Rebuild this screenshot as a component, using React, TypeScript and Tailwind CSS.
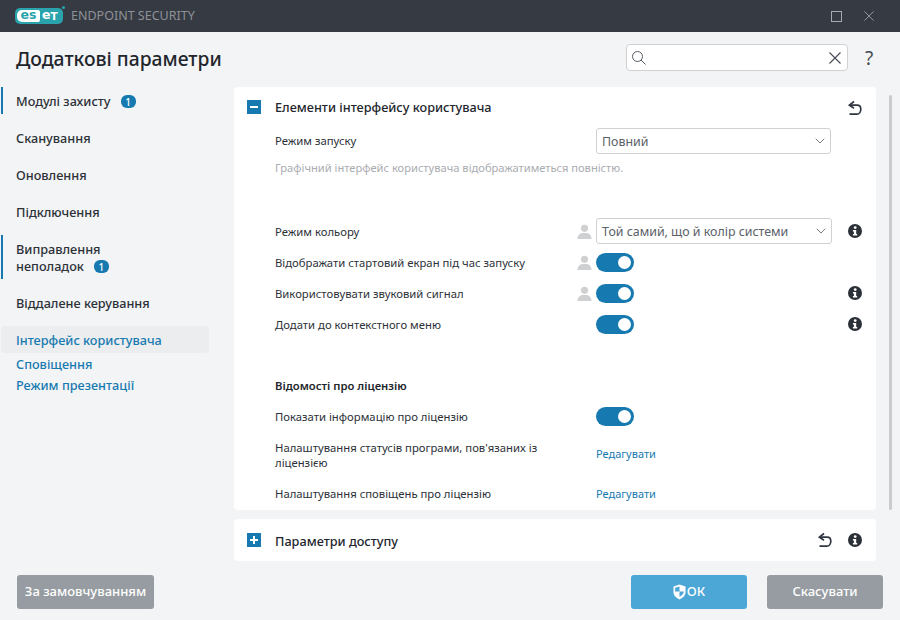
import { ChevronDown } from "lucide-react";

const font = "font-['Noto_Sans','Open_Sans',sans-serif]";

const Info = () => (
  <svg viewBox="0 0 14 14" className="h-[14px] w-[14px]">
    <circle cx="7" cy="7" r="7" fill="#2c3138" />
    <circle cx="7.200" cy="3.600" r="1.400" fill="#fff" />
    <path d="M4.900 6h3.300v4h1v1.500H4.900V10h1V7.400h-1z" fill="#fff" />
  </svg>
);

const User = () => (
  <svg viewBox="0 0 16 16" className="h-[15px] w-[15px]">
    <circle cx="8" cy="4.600" r="3.800" fill="#cfd0d2" />
    <path d="M0.500 16c0-4 2.500-6 5-6.500h5c2.500.5 5 2.500 5 6.500z" fill="#cfd0d2" />
  </svg>
);

const Undo = () => (
  <svg viewBox="0 0 16 16" className="h-4 w-4" fill="none" stroke="#2f3640" strokeWidth="1.700">
    <path d="M7 1.500 2.400 5.200 7 8.200" />
    <path d="M2.800 5.200h7.400c2.200 0 3.600 1.700 3.600 4s-1.400 5-3.900 5H2.500" />
  </svg>
);

const Cross = ({ size, color, width = 1 }: { size: number; color: string; width?: number }) => (
  <svg viewBox="0 0 12 12" width={size} height={size} fill="none" stroke={color} strokeWidth={width}>
    <path d="M0.500 0.500 11.500 11.500M11.500 0.500 0.500 11.500" />
  </svg>
);

const Toggle = () => (
  <div className="flex h-[19px] w-[38px] items-center justify-end rounded-full bg-[#167ab0] pr-[3px]">
    <div className="h-[13px] w-[13px] rounded-full bg-white" />
  </div>
);

const Badge = () => (
  <span className="flex h-[13px] w-[15px] items-center justify-center rounded-[6px] bg-[#167ab0] text-[10px] leading-none text-white">
    1
  </span>
);

const Expander = ({ plus }: { plus?: boolean }) => (
  <div className="relative h-[14px] w-[14px] bg-[#167ab0]">
    <div className="absolute left-[3px] top-[6px] h-[2px] w-[8px] bg-white" />
    {plus && <div className="absolute left-[6px] top-[3px] h-[8px] w-[2px] bg-white" />}
  </div>
);

const Row = ({
  label,
  user,
  info,
  children,
  className = "h-[31px]",
}: {
  label: React.ReactNode;
  user?: boolean;
  info?: boolean;
  children?: React.ReactNode;
  className?: string;
}) => (
  <div className={`flex items-center ${className}`}>
    <div className="w-[343px] pl-[41px] text-[11.300px] leading-[15px] text-[#2c3138]">{label}</div>
    <div className="flex w-[19px] justify-start">{user && <User />}</div>
    <div className="w-[236px]">{children}</div>
    <div className="ml-px flex w-[43px] justify-center">{info && <Info />}</div>
  </div>
);

const Select = ({ value, className = "w-[235px]" }: { value: string; className?: string }) => (
  <div
    className={`flex h-[26px] items-center justify-between rounded-[3px] border border-[#cfd1d3] bg-white pl-[5px] pr-[2px] text-[12.400px] text-[#5b6168] ${className}`}
  >
    <span className="pt-[2px]">{value}</span>
    <ChevronDown size={16} strokeWidth={1.100} color="#444b52" />
  </div>
);

const NavItem = ({ label, bar, badge }: { label: string; bar?: boolean; badge?: boolean }) => (
  <div
    className={`ml-px flex h-[27px] items-center gap-[10px] pt-[2px] text-[12.700px] font-medium text-[#2c3138] ${
      bar ? "border-l-2 border-[#167ab0] pl-[13px]" : "pl-[15px]"
    }`}
  >
    <span>{label}</span>
    {badge && <Badge />}
  </div>
);

const Link = ({ children, className = "" }: { children: React.ReactNode; className?: string }) => (
  <span className={`block text-[11px] text-[#167ab0] ${className}`}>{children}</span>
);

export default function App() {
  return (
    <div className={`flex h-[620px] w-[900px] flex-col overflow-hidden bg-[#f3f4f6] ${font}`}>
      {/* title bar */}
      <div className="flex h-[32px] items-center justify-between bg-[#363a42] pl-[15px] pr-[26px]">
        <div className="flex items-center gap-[8px]">
          <div className="relative flex h-[16px] w-[48px] items-center rounded-[5px] bg-[#2ba3ad] pl-[2px] font-['DejaVu_Sans',sans-serif] text-[12.500px] font-bold leading-none text-white">
            <span className="flex h-[12px] w-[23px] items-center justify-center rounded-l-[5px] rounded-r-[2px] bg-white pb-px text-[#2ba3ad]">
              es
            </span>
            <span className="pb-px pl-[2px]">e</span>
            <span className="text-[10.500px]">T</span>
            <span className="absolute -right-[2px] -top-[2px] h-[3px] w-[3px] rounded-full bg-[#2ba3ad]" />
          </div>
          <span className="text-[12.500px] text-[#8e9298]">ENDPOINT SECURITY</span>
        </div>
        <div className="flex items-center gap-[22px]">
          <div className="h-[11px] w-[11px] border border-[#a7a9ad]" />
          <Cross size={10} color="#a7a9ad" />
        </div>
      </div>

      {/* header */}
      <div className="flex h-[55px] justify-between pl-[16px] pr-[26px]">
        <h1 className="pt-[12px] text-[19.300px] font-medium leading-[30px] text-[#22262c]">Додаткові параметри</h1>
        <div className="flex items-center gap-[17px] self-start pt-[11px]">
          <div className="flex h-[27px] w-[222px] items-center justify-between rounded-[4px] border border-[#cfd1d3] bg-white pl-[5px] pr-[6px]">
            <svg viewBox="0 0 14 14" width={14} height={14} fill="none" stroke="#555b62" strokeWidth="1">
              <circle cx="5.500" cy="5.500" r="5" />
              <path d="M9 9l4.500 4.500" />
            </svg>
            <Cross size={12} color="#444b52" width={1.100} />
          </div>
          <span className="w-[9px] pt-[2px] text-[19px] leading-[27px] text-[#444b52]">?</span>
        </div>
      </div>

      {/* main */}
      <div className="flex min-h-0 flex-1">
        <nav className="w-[234px]">
          <NavItem label="Модулі захисту" bar badge />
          <div className="mt-[10px]"><NavItem label="Сканування" /></div>
          <div className="mt-[10px]"><NavItem label="Оновлення" /></div>
          <div className="mt-[10px]"><NavItem label="Підключення" /></div>
          <div className="ml-px mt-[10px] flex h-[44px] flex-col justify-center border-l-2 border-[#167ab0] pl-[13px] pt-[2px] text-[12.700px] font-medium leading-[17px] text-[#2c3138]">
            <span>Виправлення</span>
            <span className="flex items-center gap-[10px]">неполадок <Badge /></span>
          </div>
          <div className="mt-[10px]"><NavItem label="Віддалене керування" /></div>
          <div className="ml-px mt-[10px] flex h-[27px] w-[208px] items-center rounded-[3px] bg-[#ecedef] pl-[15px] pt-[2px] text-[12.700px] font-medium text-[#167ab0]">
            Інтерфейс користувача
          </div>
          <div className="mt-px pl-[16px] text-[12.700px] font-medium leading-[21px] text-[#167ab0]">
            <div>Сповіщення</div>
            <div>Режим презентації</div>
          </div>
        </nav>

        <div className="w-[642px]">
          <section className="h-[423px] rounded-[4px] bg-white">
            <div className="flex h-[41px] items-center justify-between px-[13px]">
              <div className="flex items-center gap-[14px]">
                <Expander />
                <span className="text-[12.700px] font-medium text-[#22262c]">Елементи інтерфейсу користувача</span>
              </div>
              <Undo />
            </div>
            <Row label={<span className="block pb-[2px]">Режим запуску</span>} className="h-[26px]">
              <Select value="Повний" />
            </Row>
            <p className="mt-[6px] pl-[41px] text-[11.150px] text-[#a9acb0]">
              Графічний інтерфейс користувача відображатиметься повністю.
            </p>
            <div className="h-[41px]" />
            <Row label="Режим кольору" user info className="h-[27px]">
              <Select value="Той самий, що й колір системи" className="w-[236px]" />
            </Row>
            <Row label="Відображати стартовий екран під час запуску" user className="h-[35px]">
              <Toggle />
            </Row>
            <Row label="Використовувати звуковий сигнал" user info className="h-[27px]">
              <Toggle />
            </Row>
            <Row label="Додати до контекстного меню" info className="h-[35px]">
              <Toggle />
            </Row>
            <div className="h-[35px]" />
            <div className="pl-[41px] text-[11.300px] font-semibold leading-[18px] text-[#22262c]">Відомості про ліцензію</div>
            <Row label="Показати інформацію про ліцензію" className="mt-[6px] h-[31px]">
              <Toggle />
            </Row>
            <Row
              label={<>Налаштування статусів програми, пов'язаних із<br />ліцензією</>}
              className="h-[46px]"
            >
              <Link>Редагувати</Link>
            </Row>
            <Row label="Налаштування сповіщень про ліцензію" className="h-[32px]">
              <Link className="pt-[2px]">Редагувати</Link>
            </Row>
          </section>

          <section className="mt-[9px] flex h-[42px] items-center justify-between rounded-[4px] bg-white pl-[13px] pr-[14px]">
            <div className="flex items-center gap-[14px]">
              <Expander plus />
              <span className="pt-[3px] text-[12.700px] font-medium text-[#22262c]">Параметри доступу</span>
            </div>
            <div className="flex items-center gap-[15px]">
              <Undo />
              <Info />
            </div>
          </section>
        </div>

        <div className="ml-[13px] mt-[8px] h-[415px] w-[3px] rounded-full bg-[#c9cbce]" />
      </div>

      {/* footer */}
      <div className="flex h-[59px] items-start justify-between px-[17px] pt-[14px] text-[13px] font-medium text-white">
        <button className="flex h-[34px] w-[137px] items-center justify-center rounded-[3px] bg-[#969ca1]">
          За замовчуванням
        </button>
        <div className="flex gap-[20px]">
          <button className="flex h-[34px] w-[116px] items-center justify-center gap-px rounded-[3px] bg-[#4ca6d6]">
            <svg viewBox="0 0 14 16" className="h-[16px] w-[13px]">
              <path d="M7 0 13.500 2.200V8c0 3.500-2.700 6.400-6.500 8C3.200 14.400.5 11.500.5 8V2.200z" fill="#fff" />
              <path d="M7 2v5.500h4.700c-.1 2.400-2.100 4.500-4.700 5.800V7.500H2.300V3.500z" fill="#4ca6d6" />
            </svg>
            ОК
          </button>
          <button className="flex h-[34px] w-[116px] items-center justify-center rounded-[3px] bg-[#969ca1]">
            Скасувати
          </button>
        </div>
      </div>
    </div>
  );
}
